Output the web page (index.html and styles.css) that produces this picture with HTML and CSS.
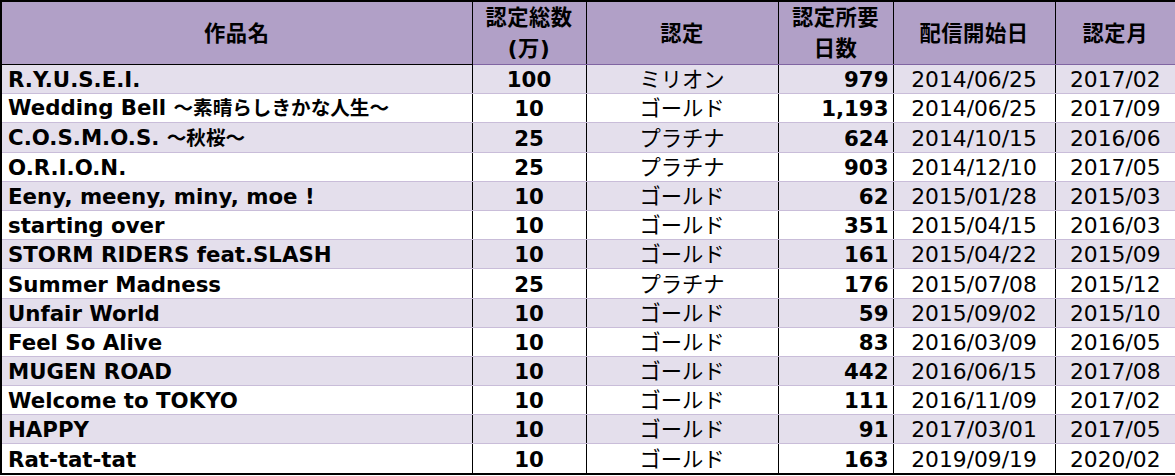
FILE: index.html
```html
<!DOCTYPE html>
<html lang="ja">
<head>
<meta charset="utf-8">
<link rel="stylesheet" href="styles.css">
</head>
<body>
<table class="cert">
  <colgroup>
    <col class="c-title"><col class="c-total"><col class="c-cert"><col class="c-days"><col class="c-date"><col class="c-month">
  </colgroup>
  <thead>
    <tr>
      <th class="h-title">作品名</th>
      <th>認定総数<br>(万)</th>
      <th>認定</th>
      <th>認定所要<br>日数</th>
      <th>配信開始日</th>
      <th>認定月</th>
    </tr>
  </thead>
  <tbody>
    <tr class="alt"><td class="title">R.Y.U.S.E.I.</td><td class="num">100</td><td class="cat">ミリオン</td><td class="days">979</td><td class="date">2014/06/25</td><td class="date">2017/02</td></tr>
    <tr><td class="title">Wedding Bell <span class="jp">～素晴らしきかな人生～</span></td><td class="num">10</td><td class="cat">ゴールド</td><td class="days">1,193</td><td class="date">2014/06/25</td><td class="date">2017/09</td></tr>
    <tr class="alt"><td class="title">C.O.S.M.O.S. <span class="jp">～秋桜～</span></td><td class="num">25</td><td class="cat">プラチナ</td><td class="days">624</td><td class="date">2014/10/15</td><td class="date">2016/06</td></tr>
    <tr><td class="title">O.R.I.O.N.</td><td class="num">25</td><td class="cat">プラチナ</td><td class="days">903</td><td class="date">2014/12/10</td><td class="date">2017/05</td></tr>
    <tr class="alt"><td class="title">Eeny, meeny, miny, moe !</td><td class="num">10</td><td class="cat">ゴールド</td><td class="days">62</td><td class="date">2015/01/28</td><td class="date">2015/03</td></tr>
    <tr><td class="title">starting over</td><td class="num">10</td><td class="cat">ゴールド</td><td class="days">351</td><td class="date">2015/04/15</td><td class="date">2016/03</td></tr>
    <tr class="alt"><td class="title">STORM RIDERS feat.SLASH</td><td class="num">10</td><td class="cat">ゴールド</td><td class="days">161</td><td class="date">2015/04/22</td><td class="date">2015/09</td></tr>
    <tr><td class="title">Summer Madness</td><td class="num">25</td><td class="cat">プラチナ</td><td class="days">176</td><td class="date">2015/07/08</td><td class="date">2015/12</td></tr>
    <tr class="alt"><td class="title">Unfair World</td><td class="num">10</td><td class="cat">ゴールド</td><td class="days">59</td><td class="date">2015/09/02</td><td class="date">2015/10</td></tr>
    <tr><td class="title">Feel So Alive</td><td class="num">10</td><td class="cat">ゴールド</td><td class="days">83</td><td class="date">2016/03/09</td><td class="date">2016/05</td></tr>
    <tr class="alt"><td class="title">MUGEN ROAD</td><td class="num">10</td><td class="cat">ゴールド</td><td class="days">442</td><td class="date">2016/06/15</td><td class="date">2017/08</td></tr>
    <tr><td class="title">Welcome to TOKYO</td><td class="num">10</td><td class="cat">ゴールド</td><td class="days">111</td><td class="date">2016/11/09</td><td class="date">2017/02</td></tr>
    <tr class="alt"><td class="title">HAPPY</td><td class="num">10</td><td class="cat">ゴールド</td><td class="days">91</td><td class="date">2017/03/01</td><td class="date">2017/05</td></tr>
    <tr><td class="title">Rat-tat-tat</td><td class="num">10</td><td class="cat">ゴールド</td><td class="days">163</td><td class="date">2019/09/19</td><td class="date">2020/02</td></tr>
  </tbody>
</table>
</body>
</html>
```

FILE: styles.css
```css
html, body {
  margin: 0;
  padding: 0;
  background: #ffffff;
}

.cert {
  width: 1175px;
  table-layout: fixed;
  border-collapse: collapse;
  font-family: "DejaVu Sans", "Noto Sans CJK JP", sans-serif;
  font-size: 21.3px;
  color: #000000;
  border: 2px solid #000000;
}

.c-title { width: 471px; }
.c-total { width: 114px; }
.c-cert { width: 192px; }
.c-days { width: 115px; }
.c-date { width: 162px; }
.c-month { width: 121px; }

.cert th {
  background: #b1a0c7;
  font-weight: bold;
  height: 62px;
  line-height: 31px;
  padding: 0;
  text-align: center;
  vertical-align: middle;
  border-left: 1px solid #000000;
  border-right: 1px solid #000000;
  border-bottom: 1px solid #8064a2;
  letter-spacing: 0.5px;
}

.cert th.h-title {
  border-bottom-color: #000000;
}

.cert td {
  height: 28.2px;
  line-height: 26px;
  padding: 0;
  vertical-align: bottom;
  white-space: nowrap;
  overflow: hidden;
  border-left: 1px solid #000000;
  border-right: 1px solid #000000;
  border-bottom: 1px solid #c9bdd9;
}

.cert tr.alt td {
  background: #e4dfec;
}

.cert tbody tr:last-child td {
  border-bottom: 2px solid #000000;
}

.cert td.title {
  font-weight: bold;
  padding-left: 6px;
}

.cert td.title .jp {
  font-size: 19.6px;
}

.cert td.num {
  font-weight: bold;
  text-align: center;
}

.cert td.cat {
  text-align: center;
}

.cert td.days {
  font-weight: bold;
  text-align: right;
  padding-right: 4px;
}

.cert td.date {
  text-align: center;
  font-size: 21.8px;
}
```
